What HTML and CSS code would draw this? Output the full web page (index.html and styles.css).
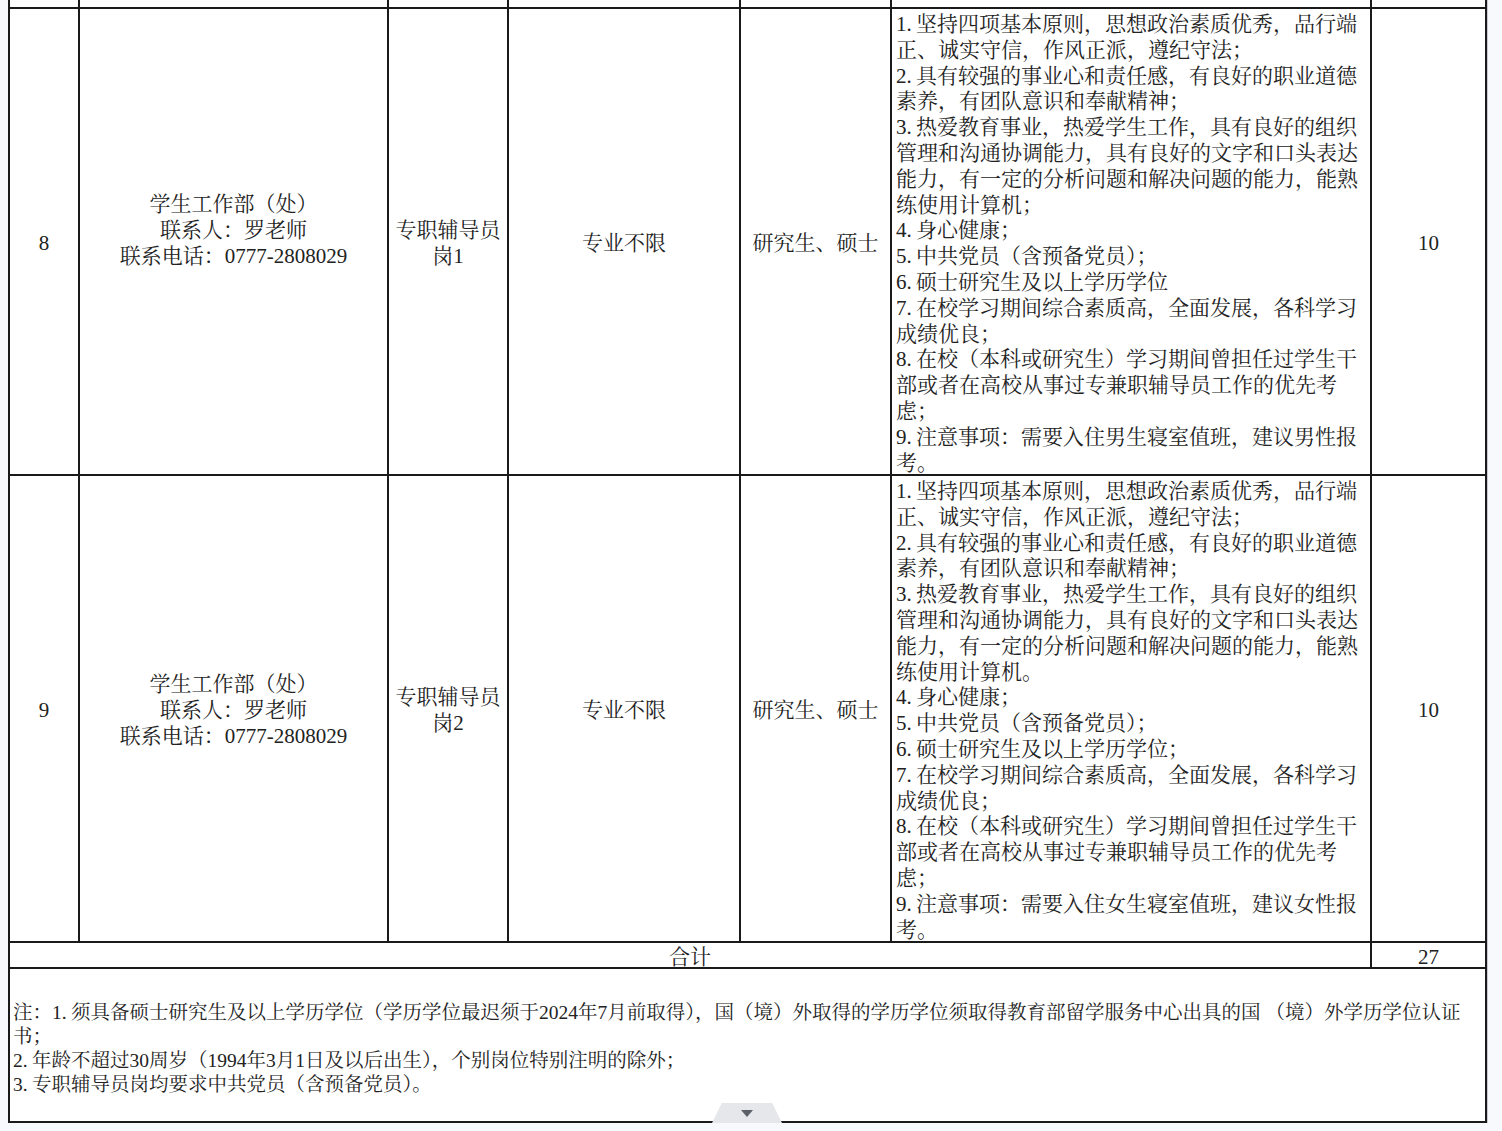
FILE: index.html
```html
<!DOCTYPE html>
<html lang="zh-CN">
<head>
<meta charset="utf-8">
<title>招聘岗位表</title>
<link rel="stylesheet" href="styles.css">
</head>
<body>
<div class="sheet">
  <table class="grid">
    <colgroup>
      <col class="c-no"><col class="c-dept"><col class="c-post"><col class="c-major"><col class="c-edu"><col class="c-req"><col class="c-num">
    </colgroup>
    <tbody>
      <tr class="stub"><td></td><td></td><td></td><td></td><td></td><td></td><td></td></tr>
      <tr class="job">
        <td class="center">8</td>
        <td class="center"><div class="lift">学生工作部（处）<br>联系人：罗老师<br>联系电话：0777-2808029</div></td>
        <td class="center">专职辅导员<br>岗1</td>
        <td class="center">专业不限</td>
        <td class="center">研究生、硕士</td>
        <td class="req"><div class="req-text"><span class="n">1.</span>坚持四项基本原则，思想政治素质优秀，品行端<br>正、诚实守信，作风正派，遵纪守法；<br><span class="n">2.</span>具有较强的事业心和责任感，有良好的职业道德<br>素养，有团队意识和奉献精神；<br><span class="n">3.</span>热爱教育事业，热爱学生工作，具有良好的组织<br>管理和沟通协调能力，具有良好的文字和口头表达<br>能力，有一定的分析问题和解决问题的能力，能熟<br>练使用计算机；<br><span class="n">4.</span>身心健康；<br><span class="n">5.</span>中共党员（含预备党员）；<br><span class="n">6.</span>硕士研究生及以上学历学位<br><span class="n">7.</span>在校学习期间综合素质高，全面发展，各科学习<br>成绩优良；<br><span class="n">8.</span>在校（本科或研究生）学习期间曾担任过学生干<br>部或者在高校从事过专兼职辅导员工作的优先考<br>虑；<br><span class="n">9.</span>注意事项：需要入住男生寝室值班，建议男性报<br>考。</div></td>
        <td class="center">10</td>
      </tr>
      <tr class="job">
        <td class="center">9</td>
        <td class="center">学生工作部（处）<br>联系人：罗老师<br>联系电话：0777-2808029</td>
        <td class="center">专职辅导员<br>岗2</td>
        <td class="center">专业不限</td>
        <td class="center">研究生、硕士</td>
        <td class="req"><div class="req-text"><span class="n">1.</span>坚持四项基本原则，思想政治素质优秀，品行端<br>正、诚实守信，作风正派，遵纪守法；<br><span class="n">2.</span>具有较强的事业心和责任感，有良好的职业道德<br>素养，有团队意识和奉献精神；<br><span class="n">3.</span>热爱教育事业，热爱学生工作，具有良好的组织<br>管理和沟通协调能力，具有良好的文字和口头表达<br>能力，有一定的分析问题和解决问题的能力，能熟<br>练使用计算机。<br><span class="n">4.</span>身心健康；<br><span class="n">5.</span>中共党员（含预备党员）；<br><span class="n">6.</span>硕士研究生及以上学历学位；<br><span class="n">7.</span>在校学习期间综合素质高，全面发展，各科学习<br>成绩优良；<br><span class="n">8.</span>在校（本科或研究生）学习期间曾担任过学生干<br>部或者在高校从事过专兼职辅导员工作的优先考<br>虑；<br><span class="n">9.</span>注意事项：需要入住女生寝室值班，建议女性报<br>考。</div></td>
        <td class="center">10</td>
      </tr>
      <tr class="total">
        <td colspan="6" class="center">合计</td>
        <td class="center">27</td>
      </tr>
      <tr class="notes">
        <td colspan="7" class="note-cell">注：<span class="n">1.</span>须具备硕士研究生及以上学历学位（学历学位最迟须于2024年7月前取得），国（境）外取得的学历学位须取得教育部留学服务中心出具的国 （境）外学历学位认证<br>书；<br><span class="n">2.</span>年龄不超过30周岁（1994年3月1日及以后出生），个别岗位特别注明的除外；<br><span class="n">3.</span>专职辅导员岗均要求中共党员（含预备党员）。</td>
      </tr>
    </tbody>
  </table>
  <div class="pager" aria-label="展开"><span class="tri"></span></div>
</div>
</body>
</html>
```
FILE: styles.css
```css
html, body {
  margin: 0;
  padding: 0;
  background: #f7f9fd;
}

body {
  font-family: "Liberation Serif", "Noto Serif CJK SC", "Noto Sans CJK SC", serif;
  color: #222222;
}

.sheet {
  position: relative;
  margin-left: 8px;
  width: 1479px;
  background: #ffffff;
  border-right: 1px solid #c9cbd0;
}

.grid {
  border-collapse: collapse;
  table-layout: fixed;
  width: 1479px;
  font-size: 21px;
  line-height: 25.8px;
}

.c-no { width: 70px; }
.c-dept { width: 309px; }
.c-post { width: 120px; }
.c-major { width: 232px; }
.c-edu { width: 151px; }
.c-req { width: 480px; }
.c-num { width: 115px; }

.grid td {
  border: 2px solid #1a1a1a;
  padding: 0;
  vertical-align: middle;
  white-space: nowrap;
}

.grid .stub td {
  border-top: none;
  height: 7px;
}

.grid .job td {
  height: 460px;
  padding-top: 5px;
}

.center { text-align: center; }

.lift { padding-bottom: 26px; }

.n {
  display: inline-block;
  width: 20px;
}

.grid .job .req {
  text-align: left;
  vertical-align: top;
  padding: 3px 0 2px 4px;
}

.req-text {
  height: 460px;
}

.grid .total td {
  height: 20px;
  padding-top: 4px;
  line-height: 20px;
  vertical-align: top;
}

.grid .notes td {
  height: 144px;
  padding: 8px 0 0 3px;
}

.note-cell {
  font-size: 19.5px;
  line-height: 24px;
  text-align: left;
}

.note-cell .n {
  width: 19px;
}

.pager {
  position: absolute;
  left: 704px;
  bottom: 0;
  width: 70px;
  height: 20px;
  background: #e6e7ea;
  clip-path: polygon(14% 0, 86% 0, 100% 100%, 0 100%);
  border-radius: 8px 8px 0 0;
  display: flex;
  justify-content: center;
  align-items: center;
}

.tri {
  width: 0;
  height: 0;
  border-left: 6px solid transparent;
  border-right: 6px solid transparent;
  border-top: 7px solid #5b5f67;
}
```
